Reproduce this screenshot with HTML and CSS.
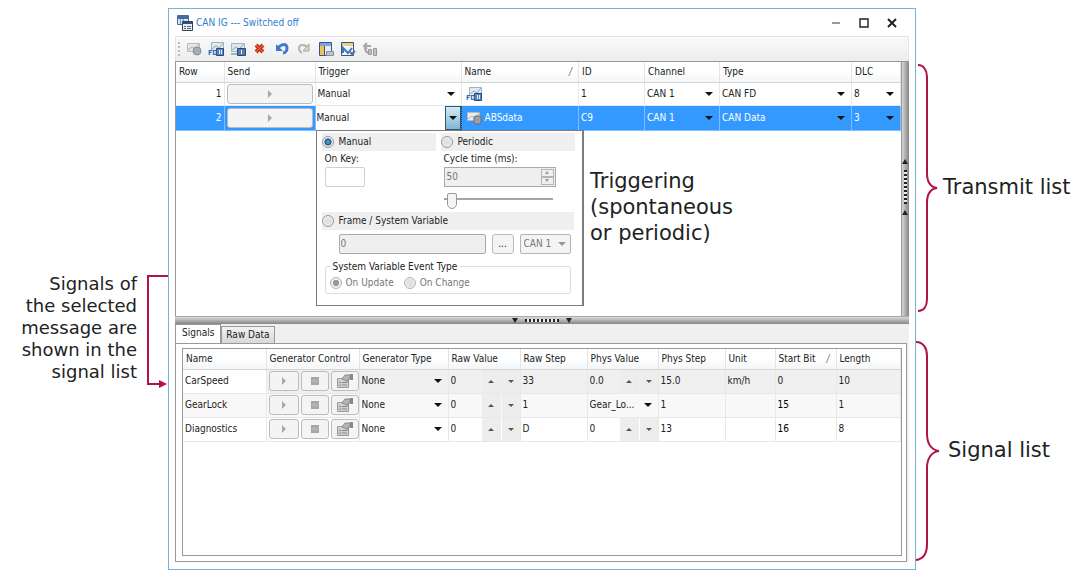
FILE: index.html
```html
<!DOCTYPE html>
<html lang="en">
<head>
<meta charset="UTF-8">
<meta name="viewport" content="width=device-width, initial-scale=1.0">
<title>CAN IG</title>
<link rel="stylesheet" href="styles.css">
</head>
<body>

<!-- Shared icon shapes -->
<svg class="icon-defs" aria-hidden="true">
    <symbol id="i-play" viewBox="0 0 10 10"><path d="M3 1v8l4-4z" fill="#a9a9a9"/></symbol>
    <symbol id="i-stop" viewBox="0 0 10 10"><rect x="1" y="1" width="8" height="8" fill="#a6a6a6"/><path d="M2 4h6M2 6h6" stroke="#bbb"/></symbol>
    <symbol id="i-props" viewBox="0 0 18 14">
        <path d="M1.5 4.5h11v9h-11z" fill="#d0d0d0" stroke="#999"/>
        <path d="M3 8.500h2M3 11h2M6 8.500h5M6 11h5" stroke="#888"/>
        <path d="M6 5l3-4h5v4h-2v3l-3-2z" fill="#b4b4b4" stroke="#8d8d8d"/>
        <path d="M14 0h3v6h-3z" fill="#888"/>
    </symbol>
    <symbol id="i-fd" viewBox="0 0 16 14">
        <path d="M3.500.5h12v8h-12z" fill="#dfe9f0" stroke="#9fb3c2"/>
        <path d="M4 7l4-3 3 2 4-5" fill="none" stroke="#8fa9bb"/>
        <path d="M8.500 6.500h7v7h-7z" fill="#5b86b8" stroke="#24488c"/>
        <path d="M11.500 8v4M13.500 8v4" stroke="#e6effa"/>
        <text x="0" y="13" font-size="7" font-weight="bold" fill="#2a6bc0">FD</text>
    </symbol>
    <symbol id="i-msg" viewBox="0 0 16 14">
        <path d="M1.500 1.500h12v8h-12z" fill="#ececec" stroke="#b9b9b9"/>
        <path d="M2 8l4-3 3 2 4-5" fill="none" stroke="#b4b4b4"/>
        <path d="M8 6l2-1h3l2 1v6l-2 1h-3l-2-1z" fill="#9ba1a8" stroke="#666d76"/>
    </symbol>
</svg>

<div class="page">

    <!-- Left annotation -->
    <div class="note-left">
        <p>Signals of the selected message are shown in the signal list</p>
        <svg class="link-arrow" viewBox="0 0 22 116" aria-hidden="true">
            <path d="M22 3H2v108h12" fill="none" stroke="#b01446" stroke-width="2"/>
            <path d="M13 107l8 4-8 4z" fill="#b01446"/>
        </svg>
    </div>

    <!-- Application window -->
    <main class="window">
        <header class="titlebar">
            <svg class="app-icon" viewBox="0 0 16 16" aria-hidden="true">
                <path d="M.5.5h11v9H.5z" fill="#d6e4f2" stroke="#4a6c96"/>
                <path d="M1 1h10v3H1z" fill="#3f6da8"/>
                <path d="M3.500 4v5M6.500 4v5" stroke="#7e96b4"/>
                <path d="M5.500 6.500h10v9h-10z" fill="#e9eef4" stroke="#2f3f58"/>
                <path d="M6 7h9v2H6z" fill="#33507e"/>
                <path d="M7 11.500h2M7 13.500h2M10 11.500h4M10 13.500h4" stroke="#56647a"/>
            </svg>
            <h1>CAN IG --- Switched off</h1>
            <div class="window-buttons">
                <button type="button" aria-label="Minimize"><svg viewBox="0 0 10 10"><path d="M1 5h8" stroke="#333"/></svg></button>
                <button type="button" aria-label="Maximize"><svg viewBox="0 0 10 10"><path d="M1 1h8v8H1z" fill="none" stroke="#222" stroke-width="1.4"/></svg></button>
                <button type="button" aria-label="Close"><svg viewBox="0 0 10 10"><path d="M1 1l8 8M9 1L1 9" stroke="#222" stroke-width="2"/></svg></button>
            </div>
        </header>

        <div class="toolbar">
            <span class="grip"></span>
            <button type="button" aria-label="Add message"><svg viewBox="0 0 16 14"><path d="M1.500 1.500h12v8h-12z" fill="#e3e8ea" stroke="#b3bbc0"/><path d="M2 8l4-3 3 2 4-5" fill="none" stroke="#a7b1b8"/><circle cx="11" cy="9" r="4" fill="#a6adb3" stroke="#868e96"/></svg></button>
            <button type="button" aria-label="Add CAN FD message"><svg><use href="#i-fd"/></svg></button>
            <button type="button" aria-label="Add frame"><svg viewBox="0 0 16 14"><path d="M1.500 1.500h13v8h-13z" fill="#dfe8ee" stroke="#a6b6c2"/><path d="M2 8l4-3 3 2 5-5" fill="none" stroke="#93a8b6"/><path d="M7.500 6.500h8v7h-8z" fill="#5678ac" stroke="#27477f"/><path d="M11.500 8v4" stroke="#fff"/><path d="M1 12h6" stroke="#9fb2c4" stroke-width="2"/></svg></button>
            <button type="button" aria-label="Delete"><svg viewBox="0 0 16 14"><path d="M4 3l7 7M11 3l-7 7" stroke="#c8381c" stroke-width="4"/><path d="M4 3l7 7M11 3l-7 7" stroke="#ee6a42"/></svg></button>
            <button type="button" aria-label="Undo"><svg viewBox="0 0 16 14"><path d="M4 6c3-4 9-5 9 0 0 3-2 5-4 5" fill="none" stroke="#3f78cc" stroke-width="3"/><path d="M2 2v7h7z" fill="#3f78cc"/></svg></button>
            <button type="button" aria-label="Redo" disabled><svg viewBox="0 0 16 14"><path d="M12 6C9 2 3 2 3 6c0 3 1 4 3 5" fill="none" stroke="#b5b5b5" stroke-width="2"/><path d="M13 2v7H7z" fill="#d6d6d6" stroke="#a5a5a5"/></svg></button>
            <button type="button" aria-label="Signal table"><svg viewBox="0 0 16 14"><path d="M1.500.5h12v13h-12z" fill="#e9edf2" stroke="#36568d"/><path d="M2 1h11v3H2z" fill="#7fa3d6"/><path d="M2 4h4v9H2z" fill="#e8c65a"/><path d="M6.500 4v9" stroke="#36568d"/><path d="M8.500 9.500h7v4h-7z" fill="#bcc4cc" stroke="#87919b"/></svg></button>
            <button type="button" aria-label="Signal graph"><svg viewBox="0 0 16 14"><path d="M1.500.5h12v13h-12z" fill="#f3f6fa" stroke="#36568d"/><path d="M2 1h11v3H2z" fill="#ead27c"/><path d="M3 11V6l5 5 4-5" fill="none" stroke="#3d77c2" stroke-width="2"/><path d="M10 10l2 2 3-3" fill="none" stroke="#5d6f8c" stroke-width="2"/></svg></button>
            <button type="button" aria-label="Rearrange" disabled><svg viewBox="0 0 16 14"><path d="M2 4h7M5 1L2 4l3 3M3 6c0 3 1 4 3 5" fill="none" stroke="#a7a7a7" stroke-width="2"/><path d="M6.500 7.500h3v5h-3zM11.500 6.500h3v7h-3z" fill="#c2c2c2" stroke="#999"/></svg></button>
        </div>

        <!-- Transmit list -->
        <section class="transmit" aria-label="Transmit list">
            <table class="grid transmit-grid">
                <colgroup>
                    <col class="c-row"><col class="c-send"><col class="c-trigger"><col><col class="c-id"><col class="c-channel"><col class="c-type"><col class="c-dlc">
                </colgroup>
                <thead>
                    <tr>
                        <th>Row</th>
                        <th>Send</th>
                        <th>Trigger</th>
                        <th><span class="sorted">Name<i>/</i></span></th>
                        <th>ID</th>
                        <th>Channel</th>
                        <th>Type</th>
                        <th>DLC</th>
                    </tr>
                </thead>
                <tbody>
                    <tr>
                        <td class="num">1</td>
                        <td class="tight"><button type="button" class="btn send" aria-label="Send row 1"><svg><use href="#i-play"/></svg></button></td>
                        <td><span class="drop"><select aria-label="Trigger row 1"><option>Manual</option></select></span></td>
                        <td><svg class="msg-icon" aria-hidden="true"><use href="#i-fd"/></svg></td>
                        <td>1</td>
                        <td><span class="drop"><select aria-label="Channel row 1"><option>CAN 1</option></select></span></td>
                        <td><span class="drop"><select aria-label="Type row 1"><option>CAN FD</option></select></span></td>
                        <td><span class="drop"><select aria-label="DLC row 1"><option>8</option></select></span></td>
                    </tr>
                    <tr class="selected">
                        <td class="num">2</td>
                        <td class="tight"><button type="button" class="btn send" aria-label="Send row 2"><svg><use href="#i-play"/></svg></button></td>
                        <td class="editing">
                            <span class="drop"><select aria-label="Trigger row 2"><option>Manual</option></select></span>

                            <!-- Trigger editor -->
                            <form class="trigger-popup">
                                <div class="modes">
                                    <div class="mode">
                                        <label class="strip"><input type="radio" name="mode" checked>Manual</label>
                                        <label class="caption" for="on-key">On Key:</label>
                                        <input class="box key" id="on-key" type="text">
                                    </div>
                                    <div class="mode">
                                        <label class="strip"><input type="radio" name="mode">Periodic</label>
                                        <label class="caption" for="cycle">Cycle time (ms):</label>
                                        <div class="box spin">
                                            <input id="cycle" type="text" value="50" disabled>
                                            <span class="spin-buttons">
                                                <button type="button" class="up" aria-label="Increase cycle time" disabled></button>
                                                <button type="button" class="down" aria-label="Decrease cycle time" disabled></button>
                                            </span>
                                        </div>
                                        <input class="slider" type="range" min="0" max="100" value="4" aria-label="Cycle time">
                                    </div>
                                </div>
                                <label class="strip"><input type="radio" name="mode">Frame / System Variable</label>
                                <div class="variable">
                                    <input class="box" type="text" value="0" aria-label="Variable" disabled>
                                    <button type="button" class="btn">...</button>
                                    <span class="drop boxed"><select aria-label="Variable channel" disabled><option>CAN 1</option></select></span>
                                </div>
                                <fieldset>
                                    <legend>System Variable Event Type</legend>
                                    <label><input type="radio" name="event" checked disabled>On Update</label>
                                    <label><input type="radio" name="event" disabled>On Change</label>
                                </fieldset>
                            </form>
                        </td>
                        <td><span class="message"><svg class="msg-icon" aria-hidden="true"><use href="#i-msg"/></svg>ABSdata</span></td>
                        <td>C9</td>
                        <td><span class="drop"><select aria-label="Channel row 2"><option>CAN 1</option></select></span></td>
                        <td><span class="drop"><select aria-label="Type row 2"><option>CAN Data</option></select></span></td>
                        <td><span class="drop"><select aria-label="DLC row 2"><option>3</option></select></span></td>
                    </tr>
                </tbody>
            </table>
            <div class="splitter-v"><span class="tri-up"></span><span class="dots-v"></span><span class="tri-up"></span></div>
            <p class="note-trigger">Triggering (spontaneous or periodic)</p>
        </section>

        <div class="splitter-h"><span class="tri-down"></span><span class="dots-h"></span><span class="tri-down"></span></div>

        <!-- Signal list -->
        <section class="signals" aria-label="Signal list">
            <div class="tabs" role="tablist">
                <button type="button" role="tab" aria-selected="true">Signals</button>
                <button type="button" role="tab" aria-selected="false">Raw Data</button>
            </div>
            <div class="tab-panel">
                <div class="sheet">
                    <table class="grid signal-grid">
                        <colgroup>
                            <col class="s-name"><col class="s-control"><col class="s-gen"><col class="s-raw"><col class="s-rawstep"><col class="s-phys"><col class="s-physstep"><col class="s-unit"><col class="s-start"><col>
                        </colgroup>
                        <thead>
                            <tr>
                                <th>Name</th>
                                <th>Generator Control</th>
                                <th>Generator Type</th>
                                <th>Raw Value</th>
                                <th>Raw Step</th>
                                <th>Phys Value</th>
                                <th>Phys Step</th>
                                <th>Unit</th>
                                <th><span class="sorted">Start Bit<i>/</i></span></th>
                                <th>Length</th>
                            </tr>
                        </thead>
                        <tbody>
                            <tr>
                                <td>CarSpeed</td>
                                <td class="tight"><span class="controls"><button type="button" class="btn" aria-label="Play CarSpeed"><svg><use href="#i-play"/></svg></button><button type="button" class="btn" aria-label="Stop CarSpeed"><svg><use href="#i-stop"/></svg></button><button type="button" class="btn" aria-label="Configure CarSpeed"><svg class="wide"><use href="#i-props"/></svg></button></span></td>
                                <td><span class="drop"><select aria-label="Generator type CarSpeed"><option>None</option></select></span></td>
                                <td class="stepcell"><span class="stepper"><input type="text" value="0" aria-label="Raw value CarSpeed"><button type="button" class="up" aria-label="Raw up"></button><button type="button" class="down" aria-label="Raw down"></button></span></td>
                                <td>33</td>
                                <td class="stepcell"><span class="stepper"><input type="text" value="0.0" aria-label="Phys value CarSpeed"><button type="button" class="up" aria-label="Phys up"></button><button type="button" class="down" aria-label="Phys down"></button></span></td>
                                <td>15.0</td>
                                <td>km/h</td>
                                <td>0</td>
                                <td>10</td>
                            </tr>
                            <tr>
                                <td>GearLock</td>
                                <td class="tight"><span class="controls"><button type="button" class="btn" aria-label="Play GearLock"><svg><use href="#i-play"/></svg></button><button type="button" class="btn" aria-label="Stop GearLock"><svg><use href="#i-stop"/></svg></button><button type="button" class="btn" aria-label="Configure GearLock"><svg class="wide"><use href="#i-props"/></svg></button></span></td>
                                <td><span class="drop"><select aria-label="Generator type GearLock"><option>None</option></select></span></td>
                                <td class="stepcell"><span class="stepper"><input type="text" value="0" aria-label="Raw value GearLock"><button type="button" class="up" aria-label="Raw up"></button><button type="button" class="down" aria-label="Raw down"></button></span></td>
                                <td>1</td>
                                <td><span class="drop"><select aria-label="Phys value GearLock"><option>Gear_Lo...</option></select></span></td>
                                <td>1</td>
                                <td></td>
                                <td class="strong">15</td>
                                <td>1</td>
                            </tr>
                            <tr>
                                <td>Diagnostics</td>
                                <td class="tight"><span class="controls"><button type="button" class="btn" aria-label="Play Diagnostics"><svg><use href="#i-play"/></svg></button><button type="button" class="btn" aria-label="Stop Diagnostics"><svg><use href="#i-stop"/></svg></button><button type="button" class="btn" aria-label="Configure Diagnostics"><svg class="wide"><use href="#i-props"/></svg></button></span></td>
                                <td><span class="drop"><select aria-label="Generator type Diagnostics"><option>None</option></select></span></td>
                                <td class="stepcell"><span class="stepper"><input type="text" value="0" aria-label="Raw value Diagnostics"><button type="button" class="up" aria-label="Raw up"></button><button type="button" class="down" aria-label="Raw down"></button></span></td>
                                <td>D</td>
                                <td class="stepcell"><span class="stepper"><input type="text" value="0" aria-label="Phys value Diagnostics"><button type="button" class="up" aria-label="Phys up"></button><button type="button" class="down" aria-label="Phys down"></button></span></td>
                                <td>13</td>
                                <td></td>
                                <td class="strong">16</td>
                                <td>8</td>
                            </tr>
                        </tbody>
                    </table>
                </div>
            </div>
        </section>
    </main>

    <!-- Right annotations -->
    <div class="notes-right">
        <div class="brace-note">
            <svg class="brace" viewBox="0 0 22 250" aria-hidden="true"><path d="M2 2C8 2 11 8 11 14v96c0 8 3 14 10 15-7 1-10 7-10 15v96c0 7-3 12-9 12" fill="none" stroke="#b01446" stroke-width="2"/></svg>
            <p>Transmit list</p>
        </div>
        <div class="brace-note">
            <svg class="brace" viewBox="0 0 24 220" aria-hidden="true"><path d="M0 1c8 0 11 7 11 14v78c0 9 4 16 12 17-8 1-12 8-12 17v76c0 9-3 15-11 16" fill="none" stroke="#b01446" stroke-width="2"/></svg>
            <p>Signal list</p>
        </div>
    </div>

</div>

</body>
</html>
```
FILE: styles.css
```css
* {
    box-sizing: border-box;
}
body {
    margin: 0;
    background-color: #fff;
    color: #222;
    font-family: "DejaVu Sans Condensed", "DejaVu Sans", sans-serif;
    font-size: 10px;
    line-height: 14px;
}
p, h1 {
    margin: 0;
    font-weight: normal;
}
button, input, select {
    margin: 0;
    padding: 0;
    border: 0;
    border-radius: 0;
    background: none;
    color: inherit;
    font: inherit;
    appearance: none;
}
svg {
    display: block;
}
.icon-defs {
    display: none;
}

/* Page: notes on both sides of the window */
.page {
    display: grid;
    grid-template-columns: 168px minmax(0, 1fr) 164px;
    min-height: 100vh;
    padding: 8px 0 6px;
}
.note-left {
    display: flex;
    justify-content: flex-end;
    align-items: flex-start;
    gap: 9px;
    padding-top: 265px;
    font-family: "DejaVu Sans", sans-serif;
    font-size: 18px;
    line-height: 22px;
    text-align: right;
}
.note-left p {
    width: 120px;
}
.link-arrow {
    width: 22px;
    height: 116px;
}
.notes-right {
    display: flex;
    flex-direction: column;
    gap: 28px;
    padding-top: 55px;
    font-family: "DejaVu Sans", sans-serif;
    font-size: 21px;
    line-height: 26px;
    white-space: nowrap;
}
.brace-note {
    display: flex;
    align-items: center;
    gap: 5px;
}
.brace-note:last-child {
    gap: 8px;
}
.brace {
    flex: none;
    width: 22px;
    height: 250px;
}
.brace-note:last-child .brace {
    width: 24px;
    height: 220px;
}
.brace-note p {
    padding-bottom: 3px;
}

/* Window frame */
.window {
    display: flex;
    flex-direction: column;
    padding: 0 6px 7px;
    border: 1px solid #7ab0de;
    background-color: #fff;
}
.titlebar {
    display: flex;
    align-items: center;
    height: 27px;
    padding: 0 12px 0 2px;
}
.titlebar h1 {
    flex: 1;
    color: #2f80cc;
    font-size: 10px;
}
.app-icon {
    width: 16px;
    height: 16px;
    margin-right: 3px;
}
.window-buttons {
    display: flex;
    gap: 18px;
}
.window-buttons svg {
    width: 10px;
    height: 10px;
}
.toolbar {
    display: flex;
    align-items: center;
    gap: 6px;
    height: 25px;
    padding-left: 2px;
    border: 1px solid #e4e4e4;
    border-bottom: 0;
    background: linear-gradient(#fafafa, #ececec);
}
.toolbar svg {
    width: 16px;
    height: 14px;
}
.grip {
    width: 2px;
    height: 14px;
    background: repeating-linear-gradient(#bbb 0 2px, transparent 2px 4px);
}

/* Tables */
.grid {
    width: 100%;
    border-collapse: collapse;
    table-layout: fixed;
}
.grid th {
    height: 20px;
    padding: 0 3px;
    border-right: 1px solid #e2e5e8;
    border-bottom: 1px solid #d5d5d5;
    background: linear-gradient(#fff 45%, #f3f5f7);
    font-weight: normal;
    text-align: left;
    white-space: nowrap;
}
.grid td {
    height: 24px;
    padding: 0 2px;
    border-right: 1px solid #e8e8e8;
    border-bottom: 1px solid #e8e8e8;
    white-space: nowrap;
}
.transmit-grid td {
    height: 23px;
}
.grid td.num {
    text-align: right;
}
.grid .strong {
    color: #000;
}
.sorted {
    display: flex;
    justify-content: space-between;
    padding-right: 3px;
}
.sorted i {
    color: #777;
}

/* Drop-downs: the arrow shares the cell with the select */
.drop {
    display: grid;
    align-items: center;
}
.drop select {
    grid-area: 1 / 1;
    width: 100%;
    height: 18px;
}
.drop::after {
    grid-area: 1 / 1;
    justify-self: end;
    width: 0;
    margin-right: 4px;
    border: 4px solid transparent;
    border-top-color: #111;
    border-bottom: 0;
    content: "";
    pointer-events: none;
}
.btn {
    display: flex;
    align-items: center;
    justify-content: center;
    height: 20px;
    border: 1px solid #bcbcbc;
    border-radius: 3px;
    background-color: #f4f4f4;
}
.btn svg {
    width: 10px;
    height: 10px;
}
.btn svg.wide {
    width: 18px;
    height: 14px;
}
.send {
    width: 100%;
}

/* Transmit list */
.transmit {
    position: relative;
    display: grid;
    grid-template-columns: minmax(0, 1fr) 8px;
    align-items: start;
    height: 255px;
    border-top: 1px solid #999;
    border-left: 1px solid #999;
}
.c-row { width: 48px; }
.c-send { width: 91px; }
.c-trigger { width: 146px; }
.c-id { width: 66px; }
.c-channel { width: 75px; }
.c-type { width: 132px; }
.c-dlc { width: 49px; }
.transmit-grid td {
    height: 23px;
}
.grid.transmit-grid td {
    height: 23px;
}
.msg-icon {
    width: 16px;
    height: 14px;
    margin-left: 2px;
}
.message {
    display: flex;
    align-items: center;
    gap: 3px;
}
.selected {
    background-color: #3399ff;
    color: #fff;
}
.grid .selected td {
    border-color: #7fbfff;
}
.grid .selected td.editing {
    position: relative;
    padding: 0;
    border: 1px dotted #333;
    background-color: #fff;
    color: #222;
}
.editing > .drop {
    grid-template-columns: 1fr 16px;
}
.editing > .drop select {
    grid-column: 1 / 3;
    padding-left: 1px;
}
.editing > .drop::after {
    z-index: 1;
    grid-column: 2;
}
.editing > .drop::before {
    grid-area: 1 / 2;
    height: 22px;
    border: 1px solid #35586e;
    background: linear-gradient(#d3eaf5, #7db8d6);
    content: "";
}

/* Trigger editor */
.trigger-popup {
    position: absolute;
    z-index: 2;
    top: 100%;
    left: 0;
    width: 268px;
    padding: 2px 8px 11px 5px;
    border: 1px solid #7d7d7d;
    border-right-width: 2px;
    background-color: #fff;
}
.modes {
    display: grid;
    grid-template-columns: 114px 134px;
    gap: 5px;
    height: 79px;
}
.mode {
    display: flex;
    flex-direction: column;
    align-items: flex-start;
}
.strip {
    display: flex;
    align-items: center;
    gap: 5px;
    width: 100%;
    height: 18px;
    background-color: #efefef;
}
.caption {
    height: 16px;
    padding: 1px 3px 0;
}
.box {
    height: 20px;
    border: 1px solid #a9a9a9;
    background-color: #efefef;
    color: #777;
}
.key {
    width: 40px;
    margin-left: 3px;
    border-color: #d0d0d0;
    border-radius: 2px;
    background-color: #fff;
}
.spin {
    display: flex;
    width: 112px;
    margin-left: 3px;
    padding: 1px;
}
.spin input {
    flex: 1;
    min-width: 0;
    padding-left: 1px;
}
.spin-buttons {
    display: flex;
    flex-direction: column;
    width: 13px;
}
.spin-buttons button {
    flex: 1;
    border: 1px solid #b5b5b5;
}
.up, .down {
    display: flex;
    align-items: center;
    justify-content: center;
}
.up::before, .down::before {
    border: 3px solid transparent;
    content: "";
}
.up::before {
    border-top: 0;
    border-bottom-color: #555;
}
.down::before {
    border-bottom: 0;
    border-top-color: #555;
}
.spin .up::before, .spin .down::before {
    border-left-width: 2px;
    border-right-width: 2px;
}
.spin .up::before {
    border-bottom-color: #999;
}
.spin .down::before {
    border-top-color: #999;
}
.slider {
    width: 109px;
    height: 18px;
    margin: 5px 0 0 3px;
    background: linear-gradient(#a5a5a5, #a5a5a5) 0 6px / 100% 2px no-repeat;
}
.slider::-webkit-slider-thumb {
    width: 10px;
    height: 16px;
    border: 1px solid #9a9a9a;
    border-radius: 2px 2px 5px 5px;
    background-color: #f4f4f4;
    appearance: none;
}
input[type="radio"] {
    flex: none;
    width: 12px;
    height: 12px;
    border: 1px solid #999;
    border-radius: 50%;
    background: radial-gradient(#e2e2e2 40%, #fafafa);
}
input[type="radio"]:checked {
    background: radial-gradient(circle, #4fa5cf 10%, #1d4f78 45%, #e5eef3 55%);
}
input[type="radio"]:disabled {
    border-color: #b5b5b5;
}
input[type="radio"]:checked:disabled {
    background: radial-gradient(circle, #999 40%, #eee 50%);
}
.variable {
    display: flex;
    gap: 6px;
    padding: 4px 3px 6px 17px;
}
.variable .box {
    flex: 1;
    min-width: 0;
    padding-left: 1px;
    border-radius: 2px;
}
.variable .btn {
    width: 22px;
}
.boxed {
    width: 51px;
    height: 20px;
    border: 1px solid #b5b5b5;
    border-radius: 2px;
    background-color: #f4f4f4;
    color: #777;
}
.boxed select {
    padding-left: 3px;
    opacity: 1;
}
.boxed::after {
    border-top-color: #999;
}
fieldset {
    display: flex;
    gap: 10px;
    margin: 0 3px;
    padding: 2px 4px 3px;
    border: 1px solid #dcdcdc;
    border-radius: 3px;
    color: #777;
}
legend {
    padding: 0 3px;
    color: #222;
}
fieldset label {
    display: flex;
    align-items: center;
    gap: 4px;
}

/* Splitters */
.splitter-v {
    display: flex;
    flex-direction: column;
    align-items: center;
    gap: 6px;
    height: 254px;
    padding-top: 97px;
    background: linear-gradient(90deg, #999 0 1px, #d6d6d6 1px, #858585);
}
.splitter-h {
    display: flex;
    justify-content: center;
    align-items: center;
    gap: 7px;
    height: 8px;
    border-top: 1px solid #aaa;
    background: linear-gradient(#dcdcdc, #858585);
}
.tri-up, .tri-down {
    border: 3px solid transparent;
}
.tri-up {
    border-top: 0;
    border-bottom: 5px solid #222;
}
.tri-down {
    border-bottom: 0;
    border-top: 5px solid #222;
}
.dots-v {
    width: 3px;
    height: 34px;
    background: repeating-linear-gradient(#222 0 2px, #eee 2px 4px);
}
.dots-h {
    width: 34px;
    height: 3px;
    background: repeating-linear-gradient(90deg, #222 0 2px, #eee 2px 4px);
}

/* Note drawn over the empty part of the transmit list */
.note-trigger {
    position: absolute;
    top: 106px;
    left: 414px;
    width: 160px;
    font-family: "DejaVu Sans", sans-serif;
    font-size: 21px;
    line-height: 26px;
}

/* Signal list */
.signals {
    display: flex;
    flex: 1;
    flex-direction: column;
    border-left: 1px solid #999;
    background-color: #f0f0f0;
}
.tabs {
    display: flex;
    align-items: flex-end;
    height: 19px;
}
.tabs button {
    height: 17px;
    padding: 0 4px;
    border: 1px solid #999;
    border-bottom: 0;
    background: linear-gradient(#f2f2f2, #d8d8d8);
}
.tabs button[aria-selected="true"] {
    height: 19px;
    padding: 0 6px 2px;
    border-left: 0;
    background: #fff;
}
.tab-panel {
    display: flex;
    flex: 1;
    margin-right: 2px;
    padding: 4px 4px 5px 6px;
    border: 1px solid #999;
    border-left: 0;
    background-color: #fff;
}
.sheet {
    flex: 1;
    border: 1px solid #999;
}
.s-name { width: 83px; }
.s-control { width: 93px; }
.s-gen { width: 89px; }
.s-raw { width: 72px; }
.s-rawstep { width: 67px; }
.s-phys { width: 71px; }
.s-physstep { width: 67px; }
.s-unit { width: 50px; }
.s-start { width: 61px; }
.signal-grid tbody tr:first-child td:not(:first-child) {
    background-color: #f0f0f0;
}
.signal-grid tbody tr:nth-child(2) {
    background-color: #f8f8f8;
}
.controls {
    display: grid;
    grid-template-columns: 30px 28px 28px;
    gap: 2px;
}
.grid td.stepcell {
    padding-right: 0;
}
.stepper {
    display: flex;
    height: 23px;
}
.stepper input {
    flex: 1;
    min-width: 0;
}
.stepper button {
    width: 19px;
    background-color: #ededed;
}
.stepper .down {
    margin-left: 1px;
    width: 18px;
}
```
